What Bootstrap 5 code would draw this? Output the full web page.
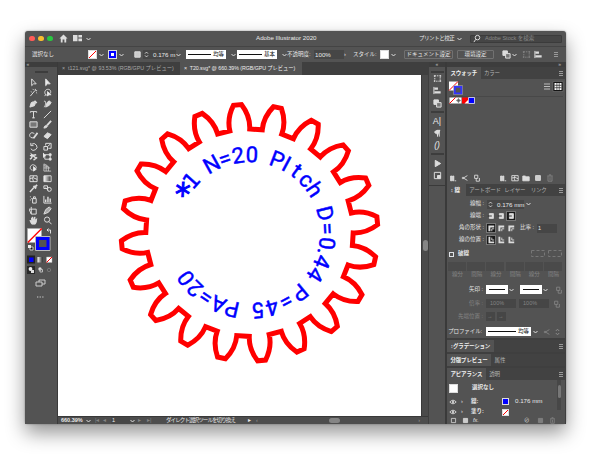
<!DOCTYPE html>
<html lang="ja">
<head>
<meta charset="utf-8">
<title>Adobe Illustrator 2020</title>
<link rel="stylesheet" href="https://cdn.jsdelivr.net/npm/bootstrap@5.3.0/dist/css/bootstrap.min.css">
<style>
body{margin:0;width:591px;height:472px;overflow:hidden;background:#fff;font:5.5px/1 "Liberation Sans","Noto Sans CJK JP",sans-serif;color:#e8e8e8}
svg{display:block;overflow:visible}
.app-win{width:541px;height:393px;margin:31px 0 0 25px;border-radius:3px;background:#535353;box-shadow:0 9px 19px rgba(0,0,0,.42),0 0 2px rgba(0,0,0,.4)}
.gr{display:grid;align-items:center;white-space:nowrap}
.gr>*{min-width:0}
.ic{width:9px;height:9px;fill:none;stroke:#ddd;stroke-width:1.1}
.ic.dim{opacity:.35}
.chev{width:5px;height:4px;fill:none;stroke:#ddd;stroke-width:1}
.titlebar{height:16px;grid-template-columns:4px 9px 9px 12px 14px 13px 170px 163px 38px 1fr;border-bottom:1px solid #444}
.dotc{width:5.6px;height:5.6px;border-radius:50%}
.en{font-size:6.2px}
.search{width:92px;height:8px;margin-left:8px;background:#454545;border:1px solid #3b3b3b;border-radius:1px;color:#888;gap:3px;padding-left:2px}
.ctrl{height:15px;grid-template-columns:7px 56px 11px 9px 11px 14px 10px 33px 10px 41px 10px 41px 9px 27px 30px 9px 27px 11px 13px 53px 45px 10px 10px 12px 10px 1fr}
.sw{width:9px;height:9px;border:1px solid #ddd;background:#fff}
.nonebg{background:linear-gradient(135deg,#fff 43%,#f00 44%,#f00 56%,#fff 57%)}
.bluebg{background:#00f}
.field{background:#464646;height:9px;line-height:9px;padding-left:1px}
.brush{width:40px;height:9px;background:#fff;color:#111;padding:0 2px}
.brush i{height:1px;flex:1;background:#111;margin-right:2px}
.pbtn{height:9px;border:1px solid #717171;border-radius:1px;text-align:center;line-height:7px}
.workarea{height:362px;background:#3f3f3f}
.toolcol{width:33px;border-right:1px solid #3a3a3a;background:#535353}
.strip{height:5px;background:#3d3d3d;font-size:5px;line-height:4px;color:#bbb}
.toolgrid{grid-template-columns:14px 14px;grid-auto-rows:10.66px;padding:10px 0 0 4px}
.grip{height:2px;width:13px;margin:0 auto;border-top:1px solid #3d3d3d;border-bottom:1px solid #3d3d3d}
.centerpane{width:370px}
.doctabs{height:13px;background:#3f3f3f;font-size:5.3px}
.doctab{width:122px;padding-left:4px;line-height:13px;color:#a8a8a8;white-space:nowrap}
.doctab.on{background:#535353;color:#eee}
.canvas{width:363px;height:341px;background:#fff}
.vbar{width:7px;background:#4b4b4b;border-left:1px solid #3a3a3a}
.status{height:8px;background:#4d4d4d;grid-template-columns:3px 25px 9px 8px 8px 19px 8px 9px 19px 82px 8px 1fr;border-top:1px solid #393939}
.dock{width:17px;background:#535353;margin-left:1px;border-right:1px solid #3a3a3a}
.dock .ic{margin:0 auto}
.panels{width:119px;border-left:1px solid #3a3a3a}
.ptabs{height:12px;background:#424242;color:#b2b2b2;white-space:nowrap;align-items:stretch;letter-spacing:-.2px}
.ptabs>span{line-height:12px;padding:0 3.5px}
.ptabs>.on{background:#535353;color:#f2f2f2;font-weight:bold}
.pbody{background:#535353}
.menu-i{width:4px;height:5px;margin:4px 2px 0 auto;border-top:1px solid #999;border-bottom:1px solid #999}
.menu-i::after{content:"";display:block;height:1px;margin-top:1px;background:#999}
.r12{height:12px}
.lab{text-align:right;padding-right:3px}
.mini{width:8px;height:8px}
.mini.sel{background:#191919;outline:1px solid #777}
.dimtxt{color:#848484}
.dashbox{height:9px;background:#4a4a4a;width:18px}
.arrow{width:22px;height:9px;background:#fff;padding:4px 3px 0}
.arrow i{display:block;height:1px;background:#111}
</style>
</head>
<body>
<svg width="0" height="0" class="position-absolute"><defs>
<symbol id="chv" viewBox="0 0 5 4"><path d="M.5 1l2 2 2-2"/></symbol>
<symbol id="sel" viewBox="0 0 10 10"><path d="M3 1v7.500l2-2h3z"/></symbol>
<symbol id="dsel" viewBox="0 0 10 10"><path fill="#eee" d="M3 1v7.500l2-2h3z"/></symbol>
<symbol id="wand" viewBox="0 0 10 10"><path d="M1.500 9l5-6M7 1v2M9 3H7.500M4 1l1 1M8 5l1 1M2 4l1 .5"/></symbol>
<symbol id="lasso" viewBox="0 0 10 10"><path d="M5 8C1 8 1 2 5 1.500S9 5 8 6M3 7L2 9"/><path fill="#eee" d="M5 4v5l1.500-1.500H9z"/></symbol>
<symbol id="pen" viewBox="0 0 10 10"><path fill="#ddd" d="M1 9l1.500-5L5 3l2 2-1 2.500z"/><path d="M6 2l2.500 2.500" stroke-width="2"/></symbol>
<symbol id="curve" viewBox="0 0 10 10"><path d="M1 3c3-3 2 6 0 6"/><path fill="#ddd" d="M3 9l1.500-5L7 2l2 2-2 3z"/></symbol>
<symbol id="type" viewBox="0 0 10 10"><path d="M1.500 3V1.800h7V3M5 1.800V9M3.500 8.700h3"/></symbol>
<symbol id="line" viewBox="0 0 10 10"><path d="M1 9L9 1"/></symbol>
<symbol id="rect" viewBox="0 0 10 10"><path fill="#777" d="M1 2h8v6H1z"/></symbol>
<symbol id="brush" viewBox="0 0 10 10"><path d="M9 1L4.500 6" stroke-width="2"/><path fill="#ddd" d="M1 9q.5-3 3-3l1 1Q4 9 1 9z"/></symbol>
<symbol id="shaper" viewBox="0 0 10 10"><path d="M6 3C2 0 0 4 1 6s4 2 5 1"/><path d="M9.500 2L5 8" stroke-width="2"/></symbol>
<symbol id="eraser" viewBox="0 0 10 10"><path fill="#ddd" d="M1 6l4-4 4 2-4 4.500z"/></symbol>
<symbol id="rot" viewBox="0 0 10 10"><path d="M3 2.500a3.700 3.700 0 1 1-1 5M2 1v3h3" /></symbol>
<symbol id="scale" viewBox="0 0 10 10"><path d="M1 5h4v4H1zM3 4V1.500h6V7H6M5 5l3-2.500"/></symbol>
<symbol id="width" viewBox="0 0 10 10"><path stroke-width="1.600" d="M1 8c2-1 3-2 2-5l5 4M1 4l7-1M5 9l4-3"/></symbol>
<symbol id="free" viewBox="0 0 10 10"><path d="M2 3h6v5H2z"/><path fill="#eee" d="M0 1v5l3-2zM7 2h2v2H7zM7 7h2v2H7z"/></symbol>
<symbol id="build" viewBox="0 0 10 10"><path d="M4 8C-1 7 2 1 5 2s3 2 3 4"/><path fill="#eee" d="M5 4v5l3-2z"/></symbol>
<symbol id="persp" viewBox="0 0 10 10"><path stroke-width=".8" d="M1 1v8h8M1 3l5 1v5M1 5.500h7M3.500 3v6M1 1l4 2"/></symbol>
<symbol id="mesh" viewBox="0 0 10 10"><path d="M1 2h8v6.500H1zM1 5q4-2 8 1M5 2Q3 5 5 8.500"/></symbol>
<symbol id="grad" viewBox="0 0 10 10"><path fill="url(#gg)" d="M1 2h8v6.500H1z"/></symbol>
<linearGradient id="gg"><stop stop-color="#fff"/><stop offset="1" stop-color="#333"/></linearGradient>
<symbol id="eye" viewBox="0 0 10 10"><path d="M1 9l4.500-5" stroke-width="1.600"/><path d="M5 2l3 3M6.500 3.500L9 1" stroke-width="2"/></symbol>
<symbol id="blend" viewBox="0 0 10 10"><path d="M1 2h4v3H1zM3 4l3 3"/><circle cx="7" cy="6" r="2.200"/></symbol>
<symbol id="spray" viewBox="0 0 10 10"><path d="M4 4h4v5H4zM5 4V2h2v2M1 2h1M2.500 4h1M1 5.500h1"/></symbol>
<symbol id="graph" viewBox="0 0 10 10"><path d="M1 1v8h8.500"/><path stroke-width="1.600" d="M3 8V5M5.500 8V2M8 8V4"/></symbol>
<symbol id="artb" viewBox="0 0 10 10"><path d="M2.500 1v2M0 3.500h8V9H2.500zM2.500 3v6"/></symbol>
<symbol id="slice" viewBox="0 0 10 10"><path fill="#aaa" d="M1 9l2-5 4-3 2 2-3 4z"/></symbol>
<symbol id="hand" viewBox="0 0 10 10"><path fill="#ddd" d="M3 9L1 5l2 .5V2l1 3V1l1.200 4L6.500 1v4L8.500 3 8 7 7 9z"/></symbol>
<symbol id="zoomi" viewBox="0 0 10 10"><circle cx="4.500" cy="4" r="2.900"/><path d="M6.500 6l3 3.200"/></symbol>
<symbol id="doc" viewBox="0 0 10 10"><path fill="#ccc" d="M2 2h6v6H2z"/></symbol>
<symbol id="sq" viewBox="0 0 10 10"><path d="M2 2h6v6H2z"/></symbol>
<symbol id="two" viewBox="0 0 10 10"><path fill="#ddd" d="M1 1h5v5H1z"/><path fill="#777" d="M4 4h5v5H4z"/></symbol>
<symbol id="aln" viewBox="0 0 10 10"><path stroke-width="2.400" d="M1.500 3h4M1.500 7h7"/><path d="M1 1v8"/></symbol>
<symbol id="tf" viewBox="0 0 10 10"><path stroke-dasharray="1.500 1" d="M2 2h6v6H2z"/><path stroke-width="2" d="M1 2h1M8 2h1M1 8h1M8 8h1"/></symbol>
<symbol id="para" viewBox="0 0 10 10"><path fill="#ddd" d="M7 1.500v7M5 8.500v-7h3M5 5.500C1 5 1 2 5 1.500z"/></symbol>
<symbol id="play" viewBox="0 0 10 10"><path fill="#ddd" d="M2.500 1.500v7L8.500 5z"/></symbol>
<symbol id="navi" viewBox="0 0 10 10"><path d="M1.500 1.500h7v7h-7z"/><path fill="#ddd" d="M5 5h3v3H5z"/></symbol>
<symbol id="link" viewBox="0 0 10 10"><path d="M2 1.500h4v4H2zM4 5v4h4V5"/></symbol>
<symbol id="share" viewBox="0 0 10 10"><path d="M8 2L3 5l5 3"/><circle cx="2.500" cy="5" r="1"/></symbol>
<symbol id="fold" viewBox="0 0 10 10"><path fill="#ddd" d="M1 2.500h3l1 1h4v5H1z"/></symbol>
<symbol id="lib" viewBox="0 0 10 10"><path fill="#ddd" d="M2 8.500v-6h1.500v6zM4.500 8.500v-6H6v6z"/><path d="M7 8.500h2"/></symbol>
<symbol id="trash" viewBox="0 0 10 10"><path d="M1.500 2.500h7M4 2V1h2v1M2.500 3v6h5V3M5 4v4"/></symbol>
<symbol id="capb" viewBox="0 0 10 10"><path fill="#ddd" d="M3 2h5v6H3z"/><path d="M1 5h5" stroke="#222"/></symbol>
<symbol id="corner" viewBox="0 0 10 10"><path stroke-width="2.500" d="M3 9V3h6"/><path d="M6 9V6h3"/></symbol>
<symbol id="pos" viewBox="0 0 10 10"><path stroke-width="2.300" d="M3 1v7h6"/><path d="M6 2v3h3"/></symbol>
<symbol id="view" viewBox="0 0 10 10"><path d="M1 5q4-4.500 8 0-4 4.500-8 0z"/><circle cx="5" cy="5" r="1" fill="#ddd"/></symbol>
<symbol id="spin" viewBox="0 0 5 8"><path d="M.8 3L2.500 1.200 4.200 3M.8 5l1.700 1.800L4.200 5"/></symbol>
</defs></svg>

<main class="app-win overflow-visible">
<header class="titlebar gr">
 <span></span><span class="dotc" style="background:#ff5b57"></span><span class="dotc" style="background:#f9bd2e"></span><span class="dotc" style="background:#28c840"></span>
 <svg class="ic" viewBox="0 0 10 10"><path fill="#ddd" stroke="none" d="M5 .5L.5 5H2v4.500h2V6h2v3.500h2V5h1.500z"/></svg>
 <svg class="ic" viewBox="0 0 10 10"><path fill="#ddd" stroke="none" d="M0 1h5v7H0zM6 1h4v3H6zM6 5h4v3H6z"/></svg>
 <svg class="chev"><use href="#chv"/></svg>
 <span class="en">Adobe Illustrator 2020</span><span style="letter-spacing:-.45px">プリントと校正</span>
 <span class="d-flex align-items-center"><svg class="chev flex-shrink-0"><use href="#chv"/></svg><span class="search d-flex align-items-center flex-shrink-0"><svg class="ic" viewBox="0 0 10 10"><circle cx="5" cy="4" r="2.500"/><path d="M3 6L1 9"/></svg>Adobe Stock を検索</span></span>
</header>
<div class="ctrl gr">
 <span></span><span>選択なし</span><span class="sw nonebg"></span><svg class="chev"><use href="#chv"/></svg>
 <span class="sw bluebg d-flex"><i class="m-auto bg-white" style="width:3px;height:3px"></i></span><svg class="chev"><use href="#chv"/></svg>
 <svg class="ic"><use href="#doc"/></svg><span class="field en d-flex align-items-center"><svg class="chev me-1" style="height:7px"><use href="#spin"/></svg>0.176 m</span><svg class="chev"><use href="#chv"/></svg>
 <span class="brush d-flex align-items-center"><i></i>均等</span><svg class="chev ms-1"><use href="#chv"/></svg>
 <span class="brush d-flex align-items-center"><i></i>基本</span><svg class="chev ms-1"><use href="#chv"/></svg>
 <span>不透明度:</span><span class="field en">100%</span><span>›</span><span>スタイル:</span><span class="sw bg-white"></span><svg class="chev"><use href="#chv"/></svg>
 <span class="pbtn me-1">ドキュメント設定</span><span class="pbtn me-2">環境設定</span>
 <svg class="ic"><use href="#two"/></svg><svg class="chev"><use href="#chv"/></svg><svg class="ic dim"><use href="#tf"/></svg><svg class="ic"><use href="#aln"/></svg><span class="menu-i mt-0 me-2"></span>
</div>

<div class="workarea d-flex">
<aside class="toolcol">
 <div class="strip">&nbsp;«</div><div class="grip mt-1"></div>
 <div class="toolgrid gr pt-1" id="tools"></div>
 <svg width="32" height="76" viewBox="0 0 32 76" fill="none">
  <g transform="translate(-26 -228)"><path fill="#fff" stroke="#aaa" stroke-width=".7" d="M28.500 230.500h14v14h-14z"/><path stroke="#f00" stroke-width="1.300" d="M28.800 244.500l14-14"/>
  <path stroke="#bbb" stroke-width="1" d="M36.500 238.500h14.500v14h-14.500z"/><path fill="#535353" stroke="#00f" stroke-width="3" d="M38.500 240.500h10.500v10h-10.500z"/>
  <path stroke="#ddd" d="M48.500 232h3v3.500M49.500 230.500l-1.500 1.500 1.500 1.500"/><path fill="#111" stroke="#ccc" d="M31 249h3v3h-3z"/><path fill="#eee" d="M29 247h3v3h-3z"/>
  <path fill="#222" d="M28 257.500h8v8h-8z"/><path fill="#00f" d="M30 259.500h4.500v4.500H30z"/><path fill="url(#gg)" d="M38.500 259h5v5.500h-5z"/><path fill="#fff" stroke="#aaa" stroke-width=".5" d="M47.500 259h5.500v5.500h-5.500z"/><path stroke="#f00" d="M47.500 264.500l5.500-5.500"/>
  <path fill="#292929" d="M28 268h8v8h-8z"/><circle cx="31.500" cy="271" r="1.900" fill="#eee"/><path fill="#ddd" d="M32 272h3v3h-3z"/><circle cx="41" cy="271" r="1.700" fill="#ddd"/><path stroke="#bbb" d="M41 271.500h2.500v2.500H41z"/><circle cx="50" cy="272" r="1.700" stroke="#777"/>
  <path stroke="#ccc" d="M37 284h6v4h-6zM40 284v-2h6v4h-3"/><path stroke="#ccc" stroke-width="1.200" stroke-dasharray="1.300 1.300" d="M38 299h7"/></g>
 </svg>
</aside>

<section class="centerpane">
 <div class="doctabs d-flex"><div class="doctab">×&nbsp; t121.svg* @ 93.53% (RGB/GPU プレビュー)</div><div class="doctab on" style="letter-spacing:-.06px">×&nbsp; T20.svg* @ 660.39% (RGB/GPU プレビュー)</div></div>
 <div class="d-flex"><div class="canvas"><svg id="art" width="363" height="341" viewBox="58 75 363 341"></svg></div>
 <div class="vbar d-flex"><i class="m-auto rounded-pill" style="width:5px;height:11px;background:#858585"></i></div></div>
 <div class="status gr"><span></span><b>660.39%</b><svg class="chev"><use href="#chv"/></svg><span class="dimtxt">|◂</span><span class="dimtxt">◂</span><span class="field" style="height:7px;line-height:7px">1</span><svg class="chev"><use href="#chv"/></svg><span class="dimtxt">▸</span><span class="dimtxt">▸|</span><span style="letter-spacing:-.9px">ダイレクト選択ツールを切り換え</span><span>▸</span><span class="d-flex align-items-center" style="color:#999">‹<i class="rounded-pill" style="width:11px;height:5px;margin-left:71px;background:#858585"></i><span class="ms-auto pe-2">›</span></span></div>
</section>

<aside class="dock"><div class="strip text-center">«</div><div class="grip mt-1"></div>
 <div class="d-flex flex-column" style="padding-top:1px;gap:3.400px"><svg class="ic"><use href="#tf"/></svg><svg class="ic"><use href="#aln"/></svg><svg class="ic"><use href="#two"/></svg>
 <div class="grip"></div><span class="text-center" style="font-size:9px">A|</span><svg class="ic"><use href="#para"/></svg><span class="text-center fst-italic" style="font-size:8.500px">()</span><div class="grip"></div><svg class="ic"><use href="#play"/></svg><svg class="ic"><use href="#navi"/></svg></div>
 <div style="height:1px;background:#3a3a3a;margin-top:5px"></div>
</aside>

<aside class="panels"><div class="strip text-end pe-1">»</div>
 <div class="ptabs d-flex"><span class="on">スウォッチ</span><span>カラー</span><i class="menu-i"></i></div>
 <div class="pbody d-flex flex-column" style="height:105px">
  <svg width="118" height="96" viewBox="447 80 118 96" fill="none"><path fill="#fff" d="M449 82.500h9v9h-9z"/><path stroke="#f00" d="M449 91.500l9-9"/><path stroke="#aaa" stroke-width=".6" d="M453.500 86.500h9v9h-9z"/><path fill="#555" stroke="#33f" stroke-width="1.800" d="M454.800 87.800h6.500v6.500h-6.500z"/>
   <path stroke="#bbb" stroke-width="1.200" d="M544 85h6M544 87.500h6M544 90h6"/><path fill="#151515" stroke="#777" stroke-width=".6" d="M553 82.500h10v10h-10z"/><path fill="#fff" d="M554.500 84h7v7h-7z"/><path stroke="#222" stroke-width=".7" d="M556.900 84v7M559.200 84v7M554.500 86.300h7M554.500 88.700h7"/><path stroke="#484848" d="M449 97.500h114"/>
   <path fill="#fff" d="M449.500 98.500h12v6h-12z"/><path stroke="#f00" d="M449.500 104.500l6-6"/><path stroke="#555" stroke-width=".8" d="M456.500 101.500h4M458.500 99.500v4"/><circle cx="458.500" cy="101.500" r="1.500" stroke="#555" stroke-width=".6"/><path fill="#f00" d="M462 98.500h6v6h-6z"/><path fill="#fff" d="M468 101v3.500h-3.500z"/><path fill="#00f" stroke="#fff" stroke-width=".7" d="M468.500 98.500h6v6h-6z"/></svg>
  <div class="gr" style="grid-template-columns:12px 12px 26px 12px 11px 12px 12px 1fr;padding-left:2px;margin-top:-1px"><svg class="ic mini"><use href="#lib"/></svg><svg class="ic mini"><use href="#share"/></svg><svg class="ic mini"><use href="#link"/></svg><svg class="ic mini"><use href="#lib"/></svg><svg class="ic mini"><use href="#mesh"/></svg><svg class="ic mini"><use href="#fold"/></svg><svg class="ic mini"><use href="#doc"/></svg><svg class="ic mini dim"><use href="#trash"/></svg></div>
 </div>
 <div class="ptabs d-flex"><span class="on">↕ 線&nbsp;&nbsp;</span><span>アートボード</span><span class="px-0">レイヤー</span><span class="ps-1">&nbsp;リンク</span><i class="menu-i"></i></div>
 <div class="pbody" style="height:142px;padding-top:2px">
  <div class="gr r12" style="grid-template-columns:40px 39px 1fr"><span class="lab">線幅 :</span><span class="field en d-flex align-items-center" style="width:37px"><svg class="chev me-1" style="height:7px"><use href="#spin"/></svg>0.176 mm</span><svg class="chev"><use href="#chv"/></svg></div>
  <div class="gr r12" style="grid-template-columns:40px 10px 10px 1fr"><span class="lab">線端 :</span><svg class="ic mini"><use href="#capb"/></svg><svg class="ic mini"><use href="#capb"/></svg><svg class="ic mini sel"><use href="#capb"/></svg></div>
  <div class="gr r12" style="grid-template-columns:40px 10px 10px 13px 17px 20px"><span class="lab">角の形状 :</span><svg class="ic mini sel"><use href="#corner"/></svg><svg class="ic mini"><use href="#corner"/></svg><svg class="ic mini"><use href="#corner"/></svg><span>比率 :</span><span class="field">1</span></div>
  <div class="gr r12" style="grid-template-columns:40px 10px 10px 1fr"><span class="lab">線の位置 :</span><svg class="ic mini sel"><use href="#pos"/></svg><svg class="ic mini"><use href="#pos"/></svg><svg class="ic mini"><use href="#pos"/></svg></div>
  <div class="gr" style="height:16px;grid-template-columns:9px 73px 1fr;padding-left:2px"><i class="border" style="width:5px;height:5px"></i><b>破線</b><svg width="32" height="8" fill="none" stroke="#777" stroke-dasharray="3 2"><path d="M.5 .5h13v6H.5zM17.500 .5h13v6h-13z"/></svg></div>
  <div class="gr dimtxt text-center" style="grid-template-columns:repeat(6,19.200px);grid-template-rows:9px 7px;padding:0 1px"><i class="dashbox"></i><i class="dashbox"></i><i class="dashbox"></i><i class="dashbox"></i><i class="dashbox"></i><i class="dashbox"></i><span>線分</span><span>間隔</span><span>線分</span><span>間隔</span><span>線分</span><span>間隔</span></div>
  <div class="gr" style="height:15px;margin-top:4px;grid-template-columns:39px 23px 11px 23px 12px 1fr"><span class="lab">矢印 :</span><span class="arrow"><i></i></span><svg class="chev"><use href="#chv"/></svg><span class="arrow"><i></i></span><svg class="chev"><use href="#chv"/></svg><svg class="ic mini dim"><use href="#link"/></svg></div>
  <div class="gr dimtxt" style="height:13px;grid-template-columns:39px 33px 34px 1fr"><span class="lab">倍率 :</span><span class="field" style="width:30px">&nbsp; 100%</span><span class="field" style="width:30px">&nbsp; 100%</span><svg class="ic mini dim"><use href="#link"/></svg></div>
  <div class="gr dimtxt" style="height:13px;grid-template-columns:39px 11px 1fr"><span class="lab">先端位置 :</span><span class="field" style="width:9px">→</span><span class="field" style="width:9px">→</span></div>
  <div class="gr" style="height:17px;grid-template-columns:39px 47px 10px 12px 1fr"><span class="text-end pe-1" style="letter-spacing:-.1px">プロファイル:</span><span class="brush d-flex align-items-center" style="width:45px"><i></i>均等</span><svg class="chev"><use href="#chv"/></svg><svg class="ic mini dim"><use href="#share"/></svg><svg class="chev dim" style="height:8px;opacity:.4"><use href="#spin"/></svg></div>
 </div>
 <div class="ptabs d-flex" style="margin:2px 0"><span class="on">↕グラデーション</span><i class="menu-i"></i></div>
 <div class="ptabs d-flex" style="margin-bottom:2px"><span class="on">分版プレビュー</span><span>属性</span></div>
 <div class="ptabs d-flex"><span class="on">アピアランス</span><span>透明</span><i class="menu-i"></i></div>
 <div class="pbody d-flex" style="height:44px"><div class="flex-grow-1">
  <div class="gr" style="height:16px;grid-template-columns:23px 1fr;padding-left:2px"><i class="sw bg-white"></i><b>選択なし</b></div>
  <div class="gr" style="height:11px;grid-template-columns:12px 10px 31px 13px 1fr;padding-left:2px"><svg class="ic mini"><use href="#view"/></svg><span>›</span><b>線:</b><i class="sw bluebg" style="width:7px;height:7px"></i><span class="en">0.176 mm</span></div>
  <div class="gr" style="height:10px;grid-template-columns:12px 10px 31px 13px 1fr;padding-left:2px"><svg class="ic mini"><use href="#view"/></svg><span>›</span><b>塗り:</b><i class="sw nonebg" style="width:7px;height:7px"></i></div>
  <div class="gr" style="height:6px;grid-template-columns:12px 12px 51px 12px 12px 1fr;padding-left:2px"><svg class="ic" style="height:7px"><use href="#sq"/></svg><svg class="ic" style="height:7px"><use href="#doc"/></svg><i>fx.</i><span>⊘</span><svg class="ic dim" style="height:7px"><use href="#doc"/></svg><svg class="ic dim" style="height:7px"><use href="#trash"/></svg></div>
 </div><div style="width:5px;height:30px;background:#474747" class="me-1"><i class="d-block mx-auto rounded-pill" style="width:3px;height:13px;margin-top:5px;background:#777"></i></div></div>
</aside>
</div>
</main>
<script>
const ids='sel dsel wand lasso pen curve type line rect brush shaper eraser rot scale width free build persp mesh grad eye blend spray graph artb slice hand zoomi'.split(' ');
document.getElementById('tools').innerHTML=ids.map(i=>`<svg class="ic"><use href="#${i}"/></svg>`).join('');
// twenty-tooth gear outline
const cx=249.5,cy=232.7;let d='';
for(let k=0;k<20;k++){
  const a=(k*18-5.4)*Math.PI/180,c=Math.cos(a),s=Math.sin(a);
  const p=(x,y)=>(cx+x*c-y*s).toFixed(2)+' '+(cy+x*s+y*c).toFixed(2)+' ';
  d+=(k?'L':'M')+p(-10,-103.2)+'C'+p(-11.2,-112)+p(-8.6,-121)+p(-4,-128.3)+'L'+p(4,-128.3)+'C'+p(8.6,-121)+p(11.2,-112)+p(10,-103.2);
}
// label characters with their angle on the circle
const chars=[['*',-57],['1',-48],['N',-29],['=',-18.5],['2',-8.5],['0',1.7],['P',20.8],['I',28.3],['t',37.2],['c',47],['h',56.6],['D',75.7],['=',87],['0',97.8],['.',104.5],['4',111.8],['4',122.5],['P',140],['=',152],['4',163],['5',173.4],['P',193],['A',203.5],['=',214],['2',224.3],['0',234.5]];
document.getElementById('art').innerHTML=`<path d="${d}Z" fill="none" stroke="#f00" stroke-width="5" stroke-linejoin="miter"/>`+
 `<g fill="#00f" stroke="#00f" stroke-width=".45" font-family="Roboto, sans-serif" font-size="22" text-anchor="middle">`+
 chars.map(([t,a])=>`<text transform="translate(${cx} ${cy}) rotate(${a})" x="0" y="${t=='*'?-63.5:-70.5}" ${t=='*'?'font-family="DejaVu Sans" font-size="31" stroke-width="1"':t=='1'?'font-family="DejaVu Sans"':''}>${t}</text>`).join('')+'</g>';
</script>
<script src="https://cdn.jsdelivr.net/npm/bootstrap@5.3.0/dist/js/bootstrap.bundle.min.js"></script>
</body>
</html>
